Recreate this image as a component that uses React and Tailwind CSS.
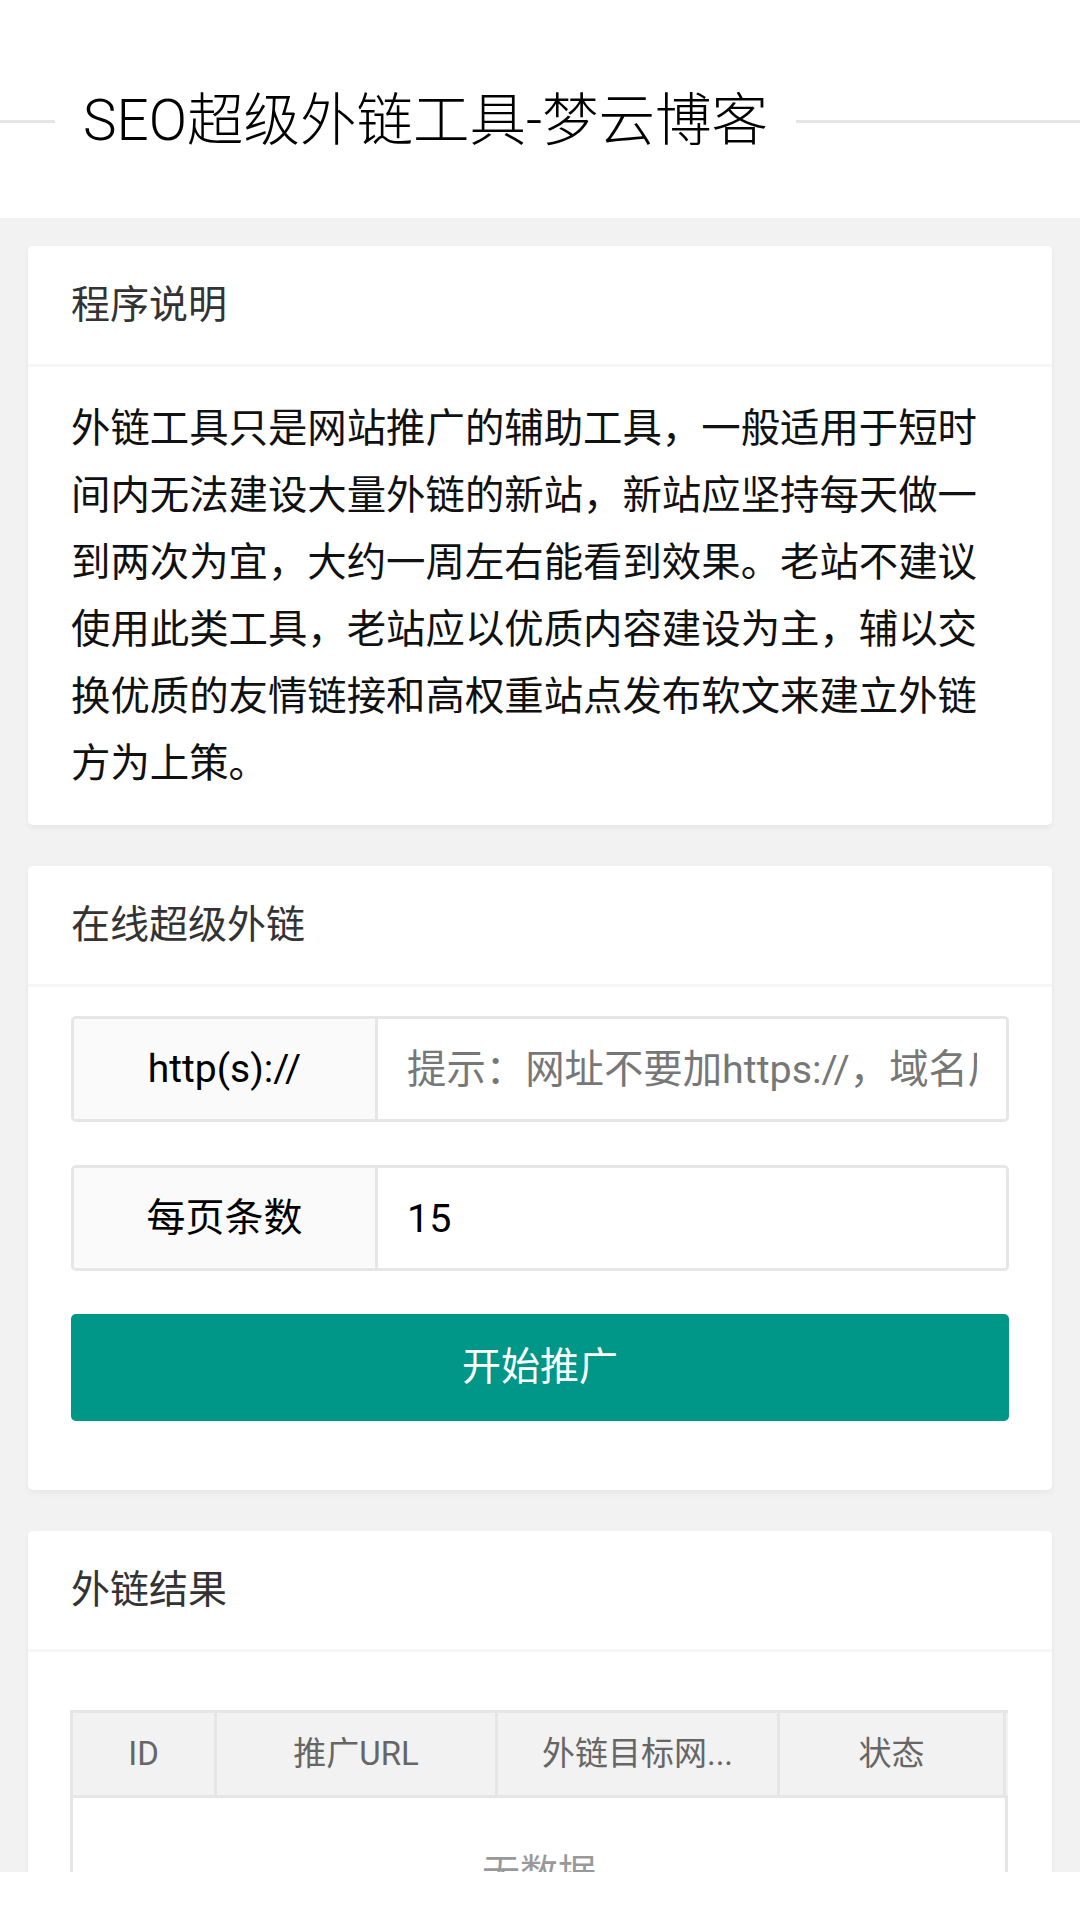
import React from "react";

const font = { fontFamily: 'Roboto, "Noto Sans CJK SC", sans-serif' };

const intro = [
  "外链工具只是网站推广的辅助工具，一般适用于短时",
  "间内无法建设大量外链的新站，新站应坚持每天做一",
  "到两次为宜，大约一周左右能看到效果。老站不建议",
  "使用此类工具，老站应以优质内容建设为主，辅以交",
  "换优质的友情链接和高权重站点发布软文来建立外链",
  "方为上策。",
];

function Card({ title, children, bodyClass = "" }) {
  return (
    <div className="bg-white rounded-[5px] shadow-[0_3px_6px_rgba(0,0,0,0.05)]">
      <div className="h-[121px] px-[43px] flex items-center border-b-[3px] border-[#f6f6f6] text-[39px] text-[#333]">
        {title}
      </div>
      <div className={`px-[43px] ${bodyClass}`}>{children}</div>
    </div>
  );
}

function FieldRow({ label, children }) {
  return (
    <div className="flex h-[106px] rounded-[5px] border-[3px] border-[#e6e6e6] overflow-hidden">
      <div className="w-[304px] shrink-0 flex items-center justify-center bg-[#fafafa] border-r-[3px] border-[#e6e6e6] text-[39px] text-black">
        {label}
      </div>
      <div className="flex-1 min-w-0 flex items-center bg-white">{children}</div>
    </div>
  );
}

export default function App() {
  return (
    <div className="w-[1080px] h-[1914px] bg-white" style={font}>
      <div className="h-[1872px] overflow-hidden bg-[#f2f2f2]">
        {/* Header */}
        <div className="h-[218px] bg-white pt-[93px]">
          <div className="flex items-center h-[57px]">
            <div className="w-[55px] h-[3px] bg-[#e6e6e6]" />
            <h1 className="px-[28px] text-[56.5px] leading-none font-light text-black whitespace-nowrap">
              SEO超级外链工具-梦云博客
            </h1>
            <div className="flex-1 h-[3px] bg-[#e6e6e6]" />
          </div>
        </div>

        <div className="px-[28px] pt-[28px] flex flex-col gap-[41px]">
          {/* 程序说明 */}
          <Card title="程序说明" bodyClass="py-[28px]">
            <div className="text-[39.4px] leading-[67px] text-[#111]">
              {intro.map((line) => (
                <div key={line} className="whitespace-nowrap">
                  {line}
                </div>
              ))}
            </div>
          </Card>

          {/* 在线超级外链 */}
          <Card title="在线超级外链" bodyClass="pt-[29px] pb-[69px]">
            <div className="flex flex-col gap-[43px]">
              <FieldRow label="http(s)://">
                <input
                  className="w-full h-full px-[29px] text-[39.4px] text-black outline-none placeholder:text-[#777] bg-white"
                  placeholder="提示：网址不要加https://，域名后面不要加/"
                  style={font}
                />
              </FieldRow>
              <FieldRow label="每页条数">
                <input
                  className="w-full h-full px-[29px] text-[39.4px] text-black outline-none bg-white"
                  defaultValue="15"
                  style={font}
                />
              </FieldRow>
              <button className="h-[107px] w-full rounded-[5px] bg-[#009688] text-white text-[39px]" style={font}>
                开始推广
              </button>
            </div>
          </Card>

          {/* 外链结果 */}
          <Card title="外链结果" bodyClass="pt-[58px]">
            <div className="w-[938px] -ml-[1px] border-[3px] border-[#e6e6e6] border-r-0">
              <div className="flex h-[85px] bg-[#f2f2f2] border-b-[3px] border-[#e6e6e6] text-[33px] text-[#666]">
                <div className="w-[144px] flex items-center justify-center border-r-[3px] border-[#e6e6e6]">ID</div>
                <div className="w-[281px] flex items-center justify-center border-r-[3px] border-[#e6e6e6]">推广URL</div>
                <div className="w-[282px] flex items-center justify-center border-r-[3px] border-[#e6e6e6]">外链目标网...</div>
                <div className="w-[226px] flex items-center justify-center border-r-[3px] border-[#e6e6e6]">状态</div>
                <div className="flex-1" />
              </div>
              <div className="w-[935px] h-[200px] bg-white border-r-[3px] border-[#e6e6e6] pt-[56px] text-center text-[38px] leading-[38px] text-[#999]">
                无数据
              </div>
            </div>
          </Card>
        </div>
      </div>
    </div>
  );
}
